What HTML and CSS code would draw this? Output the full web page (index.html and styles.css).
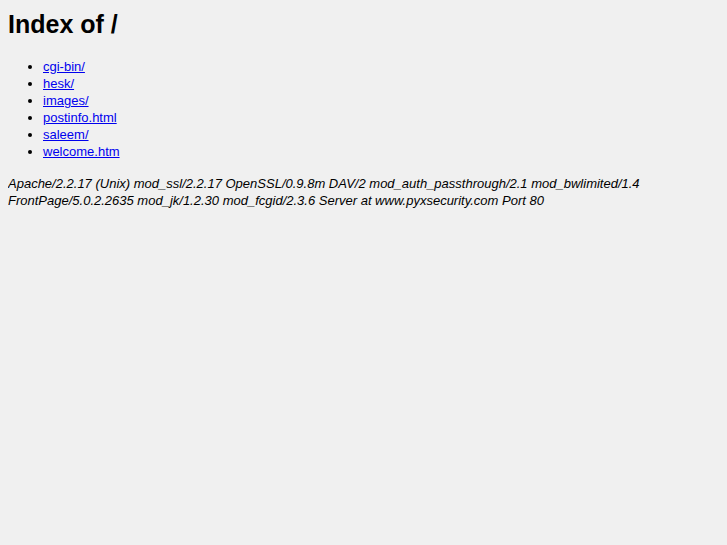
FILE: index.html
```html
<!DOCTYPE html>
<html>
<head>
<title>Index of /</title>
<link rel="stylesheet" href="styles.css">
</head>
<body>
<h1 class="title">Index of /</h1>
<ul class="listing">
<li><a href="cgi-bin/"> cgi-bin/</a></li>
<li><a href="hesk/"> hesk/</a></li>
<li><a href="images/"> images/</a></li>
<li><a href="postinfo.html"> postinfo.html</a></li>
<li><a href="saleem/"> saleem/</a></li>
<li><a href="welcome.htm"> welcome.htm</a></li>
</ul>
<address class="sig">Apache/2.2.17 (Unix) mod_ssl/2.2.17 OpenSSL/0.9.8m DAV/2 mod_auth_passthrough/2.1 mod_bwlimited/1.4 FrontPage/5.0.2.2635 mod_jk/1.2.30 mod_fcgid/2.3.6 Server at www.pyxsecurity.com Port 80</address>
</body>
</html>
```
FILE: styles.css
```css
html { background: #f0f0f0; }
body {
  margin: 8px;
  font-family: "Liberation Sans", Arial, sans-serif;
  font-size: 13px;
  line-height: 17px;
  color: #000;
}
.title {
  font-size: 25px;
  line-height: 30px;
  margin: 1px 0 19px;
}
.listing {
  margin: 0 0 15px;
  padding-left: 35px;
}
.listing a { color: #0000ee; }
.sig { font-style: italic; }
```
